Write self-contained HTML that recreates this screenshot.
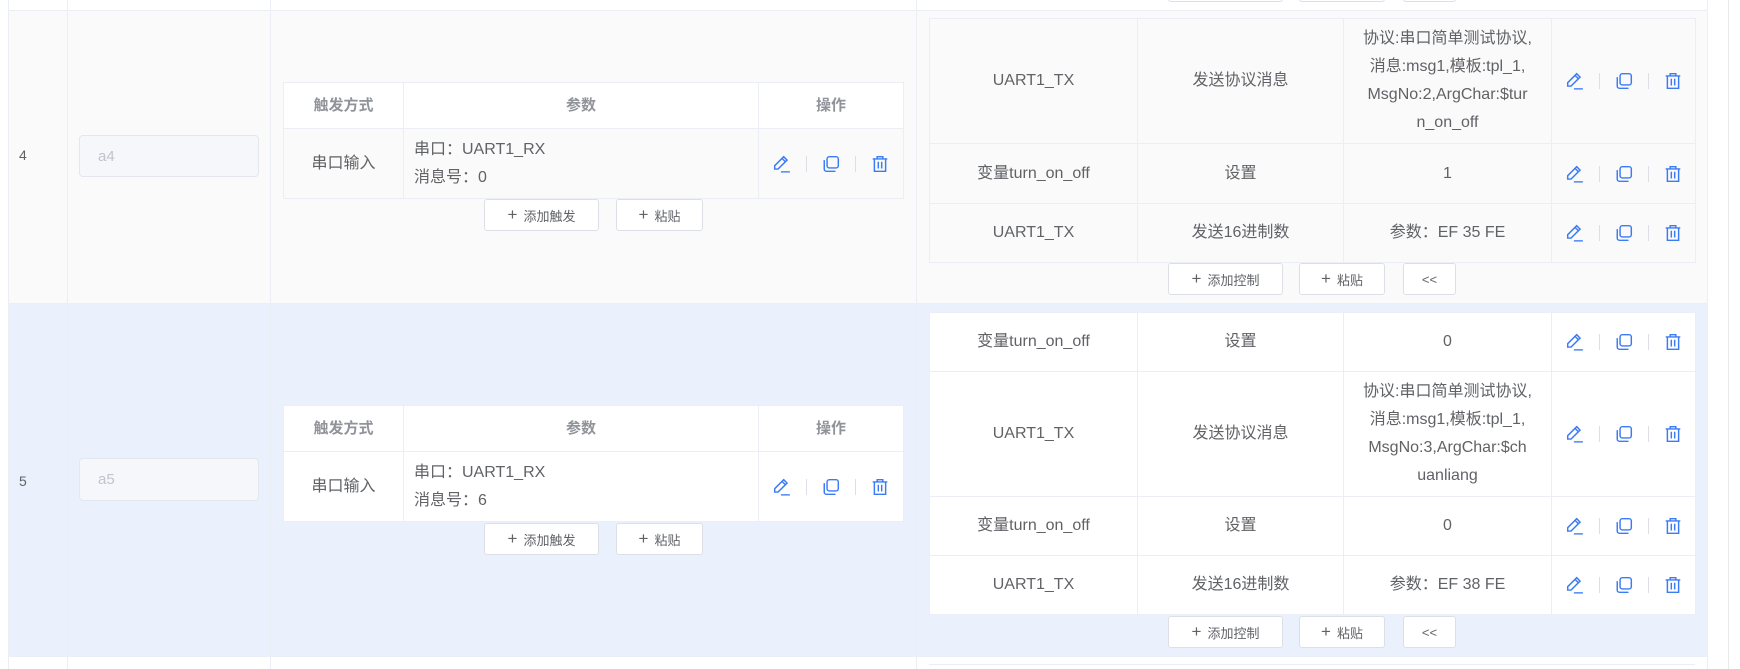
<!DOCTYPE html>
<html><head><meta charset="utf-8"><style>
*{box-sizing:border-box;margin:0;padding:0}
body{width:1740px;height:669px;overflow:hidden;background:#fff;font-family:"Liberation Sans","Noto Sans CJK SC",sans-serif;color:#606266;font-size:16px;position:relative}
.a{position:absolute}
.vl{position:absolute;width:1px;background:#ebeef5}
.hl{position:absolute;height:1px;background:#ebeef5}
table{border-collapse:collapse;position:absolute;table-layout:fixed;background:#fff}
td,th{border:1px solid #ebeef5;text-align:center;padding:0 10px;line-height:28px;word-break:break-all}
th{color:#909399;font-weight:bold;font-size:15px}
.cfg td{background:#fafafa}
.r5 .cfg td{background:#fff}
.btn{position:absolute;height:32px;border:1px solid #dcdfe6;border-radius:3px;background:#fff;font-size:13px;color:#606266;display:flex;align-items:center;justify-content:center;gap:6px}
.btn b{font-weight:normal;font-size:17px;color:#606266}
.inp{position:absolute;border:1px solid #e4e7ed;border-radius:4px;background:#f5f7fa;color:#c0c4cc;font-size:15px;padding-left:18px;display:flex;align-items:center}
.ops{display:flex;align-items:center;justify-content:center;gap:15px}
.sep{width:1px;height:16px;background:#dcdfe6}
.num{position:absolute;left:19px;font-size:14px;color:#606266}
.long{padding:0 4px;font-size:16px;white-space:nowrap;overflow:hidden}
</style></head><body>
<div class="a" style="left:0;top:0;width:1707px;height:10px;background:#fff"></div>
<div class="btn" style="left:1168px;top:-30px;width:115px"></div>
<div class="btn" style="left:1299px;top:-30px;width:86px"></div>
<div class="btn" style="left:1403px;top:-30px;width:53px"></div>
<div class="a" style="left:8px;top:10px;width:1699px;height:293px;background:#fafafa"></div>
<div class="a r5" style="left:8px;top:303px;width:1699px;height:353px;background:#ebf1fc"></div>
<div class="hl" style="left:8px;top:10px;width:1699px"></div>
<div class="hl" style="left:8px;top:303px;width:1699px"></div>
<div class="hl" style="left:8px;top:656px;width:1699px"></div>
<div class="vl" style="left:8px;top:0;height:669px"></div>
<div class="vl" style="left:67px;top:0;height:669px"></div>
<div class="vl" style="left:270px;top:0;height:669px"></div>
<div class="vl" style="left:916px;top:0;height:669px"></div>
<div class="vl" style="left:1707px;top:0;height:669px"></div>
<div class="a" style="left:1728px;top:0;width:12px;height:669px;background:#fff;border-left:1px solid #e8e8e8"></div>
<div class="hl" style="left:929px;top:664px;width:766px"></div>

<svg width="0" height="0" style="position:absolute"><defs>
<symbol id="ed" viewBox="0 0 16 16"><path d="M9.5 1.5l3 3-8 8H1.5v-3z M8 3l3 3" fill="none" stroke="#3b7bf6" stroke-width="1.3"/><path d="M7 15h8" stroke="#3b7bf6" stroke-width="1.2"/></symbol>
<symbol id="cp" viewBox="0 0 16 16"><rect x="4.5" y="1.5" width="10" height="10" rx="2" fill="none" stroke="#3b7bf6" stroke-width="1.3"/><path d="M2 4.5v8a2 2 0 0 0 2 2h8" fill="none" stroke="#3b7bf6" stroke-width="1.3"/></symbol>
<symbol id="tr" viewBox="0 0 16 16"><path d="M1.5 3.5h13M5.5 3.5V1.5h5v2M3 3.5v11h10v-11M6.5 6v6M9.5 6v6" fill="none" stroke="#3b7bf6" stroke-width="1.3"/></symbol>
</defs></svg>

<div class="num" style="top:147px">4</div>
<div class="inp" style="left:79px;top:135px;width:180px;height:42px">a4</div>
<table style="left:283px;top:82px;width:620px">
<colgroup><col style="width:120px"><col style="width:355px"><col style="width:145px"></colgroup>
<tr style="height:46px"><th>触发方式</th><th>参数</th><th>操作</th></tr>
<tr class="cfg" style="height:70px"><td>串口输入</td><td style="text-align:left">串口：UART1_RX<br>消息号：0</td><td><div class="ops"><svg width="18" height="18"><use href="#ed"/></svg><i class="sep"></i><svg width="18" height="18"><use href="#cp"/></svg><i class="sep"></i><svg width="18" height="18"><use href="#tr"/></svg></div></td></tr>
</table>
<div class="btn" style="left:484px;top:199px;width:115px"><b>+</b>添加触发</div>
<div class="btn" style="left:616px;top:199px;width:87px"><b>+</b>粘贴</div>

<table class="cfg" style="left:929px;top:18px;width:766px">
<colgroup><col style="width:208px"><col style="width:206px"><col style="width:208px"><col style="width:144px"></colgroup>
<tr style="height:125px"><td>UART1_TX</td><td>发送协议消息</td><td class="long">协议:串口简单测试协议,<br>消息:msg1,模板:tpl_1,<br>MsgNo:2,ArgChar:$tur<br>n_on_off</td><td><div class="ops"><svg width="18" height="18"><use href="#ed"/></svg><i class="sep"></i><svg width="18" height="18"><use href="#cp"/></svg><i class="sep"></i><svg width="18" height="18"><use href="#tr"/></svg></div></td></tr>
<tr style="height:60px"><td>变量turn_on_off</td><td>设置</td><td>1</td><td><div class="ops"><svg width="18" height="18"><use href="#ed"/></svg><i class="sep"></i><svg width="18" height="18"><use href="#cp"/></svg><i class="sep"></i><svg width="18" height="18"><use href="#tr"/></svg></div></td></tr>
<tr style="height:59px"><td>UART1_TX</td><td>发送16进制数</td><td>参数：EF 35 FE</td><td><div class="ops"><svg width="18" height="18"><use href="#ed"/></svg><i class="sep"></i><svg width="18" height="18"><use href="#cp"/></svg><i class="sep"></i><svg width="18" height="18"><use href="#tr"/></svg></div></td></tr>
</table>
<div class="btn" style="left:1168px;top:263px;width:115px"><b>+</b>添加控制</div>
<div class="btn" style="left:1299px;top:263px;width:86px"><b>+</b>粘贴</div>
<div class="btn" style="left:1403px;top:263px;width:53px">&lt;&lt;</div>

<div class="num" style="top:473px">5</div>
<div class="inp" style="left:79px;top:458px;width:180px;height:43px">a5</div>
<table style="left:283px;top:405px;width:620px">
<colgroup><col style="width:120px"><col style="width:355px"><col style="width:145px"></colgroup>
<tr style="height:46px"><th>触发方式</th><th>参数</th><th>操作</th></tr>
<tr style="height:70px"><td>串口输入</td><td style="text-align:left">串口：UART1_RX<br>消息号：6</td><td><div class="ops"><svg width="18" height="18"><use href="#ed"/></svg><i class="sep"></i><svg width="18" height="18"><use href="#cp"/></svg><i class="sep"></i><svg width="18" height="18"><use href="#tr"/></svg></div></td></tr>
</table>
<div class="btn" style="left:484px;top:523px;width:115px"><b>+</b>添加触发</div>
<div class="btn" style="left:616px;top:523px;width:87px"><b>+</b>粘贴</div>

<table style="left:929px;top:312px;width:766px">
<colgroup><col style="width:208px"><col style="width:206px"><col style="width:208px"><col style="width:144px"></colgroup>
<tr style="height:59px"><td>变量turn_on_off</td><td>设置</td><td>0</td><td><div class="ops"><svg width="18" height="18"><use href="#ed"/></svg><i class="sep"></i><svg width="18" height="18"><use href="#cp"/></svg><i class="sep"></i><svg width="18" height="18"><use href="#tr"/></svg></div></td></tr>
<tr style="height:125px"><td>UART1_TX</td><td>发送协议消息</td><td class="long">协议:串口简单测试协议,<br>消息:msg1,模板:tpl_1,<br>MsgNo:3,ArgChar:$ch<br>uanliang</td><td><div class="ops"><svg width="18" height="18"><use href="#ed"/></svg><i class="sep"></i><svg width="18" height="18"><use href="#cp"/></svg><i class="sep"></i><svg width="18" height="18"><use href="#tr"/></svg></div></td></tr>
<tr style="height:59px"><td>变量turn_on_off</td><td>设置</td><td>0</td><td><div class="ops"><svg width="18" height="18"><use href="#ed"/></svg><i class="sep"></i><svg width="18" height="18"><use href="#cp"/></svg><i class="sep"></i><svg width="18" height="18"><use href="#tr"/></svg></div></td></tr>
<tr style="height:59px"><td>UART1_TX</td><td>发送16进制数</td><td>参数：EF 38 FE</td><td><div class="ops"><svg width="18" height="18"><use href="#ed"/></svg><i class="sep"></i><svg width="18" height="18"><use href="#cp"/></svg><i class="sep"></i><svg width="18" height="18"><use href="#tr"/></svg></div></td></tr>
</table>
<div class="btn" style="left:1168px;top:616px;width:115px"><b>+</b>添加控制</div>
<div class="btn" style="left:1299px;top:616px;width:86px"><b>+</b>粘贴</div>
<div class="btn" style="left:1403px;top:616px;width:53px">&lt;&lt;</div>
</body></html>
